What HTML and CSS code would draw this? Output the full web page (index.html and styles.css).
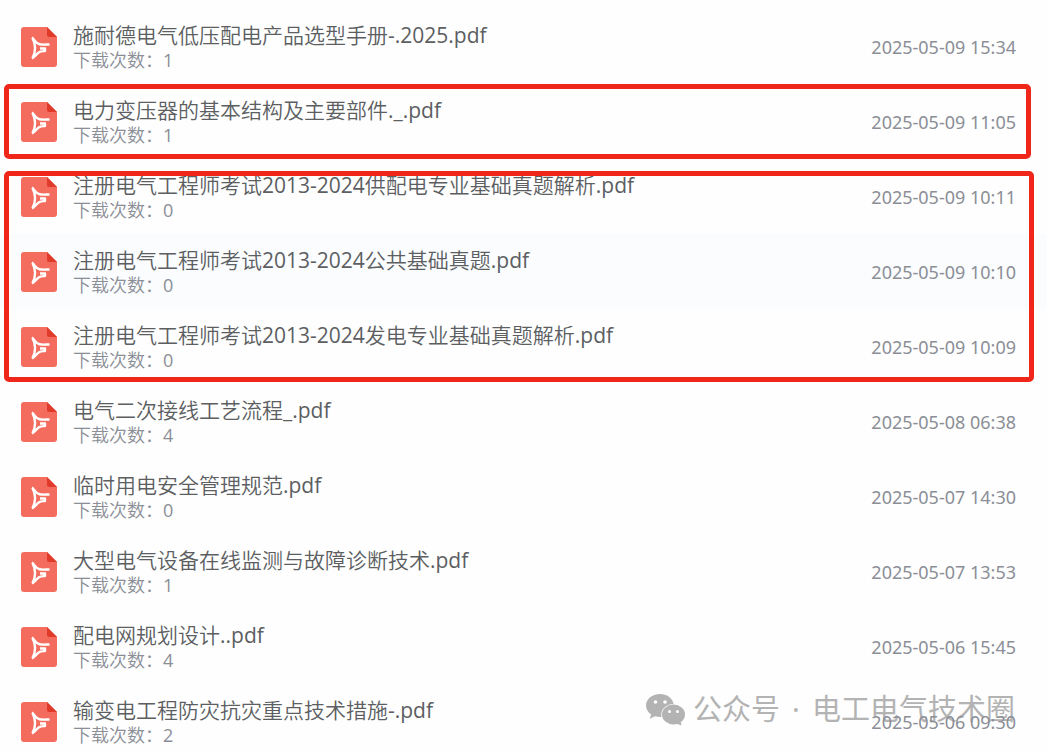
FILE: index.html
```
<!DOCTYPE html>
<html lang="zh-CN">
<head>
<meta charset="utf-8">
<title>文件列表</title>
<link rel="stylesheet" href="styles.css">
</head>
<body>
<svg class="sprite" aria-hidden="true">
  <symbol id="pdf" viewBox="0 0 36 40">
    <path fill="#f46c5e" d="M3 0H26L36 10V37a3 3 0 0 1-3 3H3a3 3 0 0 1-3-3V3a3 3 0 0 1 3-3Z"/>
    <path fill="#e03a2b" d="M26 0L36 10H28a2 2 0 0 1-2-2Z"/>
    <path fill="none" stroke="#fff" stroke-width="2.400" stroke-linejoin="round" d="M11 10.500C13.500 12.500 14.500 16.500 18.500 17.300C21.500 17.900 25 17.500 28.500 17.500M11 31.500C14 29.500 15.500 27 18 25.300C20 24 21.500 24.200 24 24V21.500H19M11.500 11C15 18 15 24.500 11.500 31"/>
  </symbol>
</svg>
<main class="page">
  <ul class="files">
    <li class="file"><svg class="icon"><use href="#pdf"/></svg><div class="info"><div class="name">施耐德电气低压配电产品选型手册-.2025.pdf</div><div class="count">下载次数：1</div></div><time class="date">2025-05-09 15:34</time></li>
  </ul>
  <ul class="files marked marked-single">
    <li class="file"><svg class="icon"><use href="#pdf"/></svg><div class="info"><div class="name">电力变压器的基本结构及主要部件._.pdf</div><div class="count">下载次数：1</div></div><time class="date">2025-05-09 11:05</time></li>
  </ul>
  <ul class="files marked marked-group">
    <li class="file"><svg class="icon"><use href="#pdf"/></svg><div class="info"><div class="name">注册电气工程师考试2013-2024供配电专业基础真题解析.pdf</div><div class="count">下载次数：0</div></div><time class="date">2025-05-09 10:11</time></li>
    <li class="file active"><svg class="icon"><use href="#pdf"/></svg><div class="info"><div class="name">注册电气工程师考试2013-2024公共基础真题.pdf</div><div class="count">下载次数：0</div></div><time class="date">2025-05-09 10:10</time></li>
    <li class="file"><svg class="icon"><use href="#pdf"/></svg><div class="info"><div class="name">注册电气工程师考试2013-2024发电专业基础真题解析.pdf</div><div class="count">下载次数：0</div></div><time class="date">2025-05-09 10:09</time></li>
  </ul>
  <ul class="files">
    <li class="file"><svg class="icon"><use href="#pdf"/></svg><div class="info"><div class="name">电气二次接线工艺流程_.pdf</div><div class="count">下载次数：4</div></div><time class="date">2025-05-08 06:38</time></li>
    <li class="file"><svg class="icon"><use href="#pdf"/></svg><div class="info"><div class="name">临时用电安全管理规范.pdf</div><div class="count">下载次数：0</div></div><time class="date">2025-05-07 14:30</time></li>
    <li class="file"><svg class="icon"><use href="#pdf"/></svg><div class="info"><div class="name">大型电气设备在线监测与故障诊断技术.pdf</div><div class="count">下载次数：1</div></div><time class="date">2025-05-07 13:53</time></li>
    <li class="file"><svg class="icon"><use href="#pdf"/></svg><div class="info"><div class="name">配电网规划设计..pdf</div><div class="count">下载次数：4</div></div><time class="date">2025-05-06 15:45</time></li>
    <li class="file"><svg class="icon"><use href="#pdf"/></svg><div class="info"><div class="name">输变电工程防灾抗灾重点技术措施-.pdf</div><div class="count">下载次数：2</div></div><time class="date">2025-05-06 09:30</time></li>
  </ul>
  <div class="watermark">
    <svg class="wechat" viewBox="0 0 40 33" aria-hidden="true">
      <path fill="#b3b3b3" d="M14 1C6.300 1 0 6.100 0 12.500c0 3.700 2 6.900 5.200 9L3.800 25.800 9 23.200c2 .6 4 .8 6.500.7C14 16.500 20 11 27.600 11 26.500 5 21 1 14 1Z"/>
      <ellipse cx="27.500" cy="21.500" rx="11.500" ry="10" fill="#b3b3b3"/>
      <path fill="#b3b3b3" d="M30 30.500L35.500 32.500 34.500 28Z"/>
      <g fill="#fff"><circle cx="9.500" cy="9" r="1.800"/><circle cx="19" cy="9" r="1.800"/><circle cx="23.500" cy="18.500" r="1.500"/><circle cx="31.500" cy="18.500" r="1.500"/></g>
    </svg>
    <span>公众号</span><span class="dot">·</span><span>电工电气技术圈</span>
  </div>
</main>
</body>
</html>
```
FILE: styles.css
```
* {
  box-sizing: border-box;
}

body {
  margin: 0;
  background: #fefefe;
  font-family: "Noto Sans", "Noto Sans CJK SC", sans-serif;
}

.sprite {
  position: absolute;
  width: 0;
  height: 0;
}

.page {
  position: relative;
  height: 100vh;
  padding-top: 9px;
  overflow: hidden;
}

.files {
  position: relative;
  margin: 0;
  padding: 0;
  list-style: none;
}

.file {
  display: flex;
  align-items: center;
  gap: 16px;
  height: 75px;
  padding: 0 31px 0 21px;
}

.active {
  background: #fafcfe;
}

.icon {
  flex: none;
  width: 36px;
  height: 40px;
}

.info {
  flex: 1;
  min-width: 0;
  font-family: "Open Sans", "Noto Sans CJK SC DemiLight", "Noto Sans CJK SC Light", "Noto Sans CJK SC", sans-serif;
}

.name {
  color: #5c5e62;
  font-size: 21px;
  line-height: 26px;
  white-space: nowrap;
}

.count {
  color: #8b8e96;
  font-size: 18px;
  line-height: 24px;
}

.date {
  position: relative;
  z-index: 2;
  color: #8b8e96;
  font-size: 18px;
  line-height: 24px;
  white-space: nowrap;
}

.marked::after {
  content: "";
  position: absolute;
  border: 5px solid #f0261b;
  border-radius: 5px;
  pointer-events: none;
}

.marked-single::after {
  inset: 0 16px 0 4px;
}

.marked-group::after {
  inset: 12px 13px 2px 4px;
}

.watermark {
  position: absolute;
  right: 32px;
  bottom: 22px;
  z-index: 1;
  display: flex;
  align-items: center;
  color: #b3b3b3;
  font-size: 29px;
  line-height: 40px;
}

.wechat {
  width: 40px;
  height: 33px;
  margin-right: 7px;
}

.dot {
  width: 32px;
  text-align: center;
}
```
